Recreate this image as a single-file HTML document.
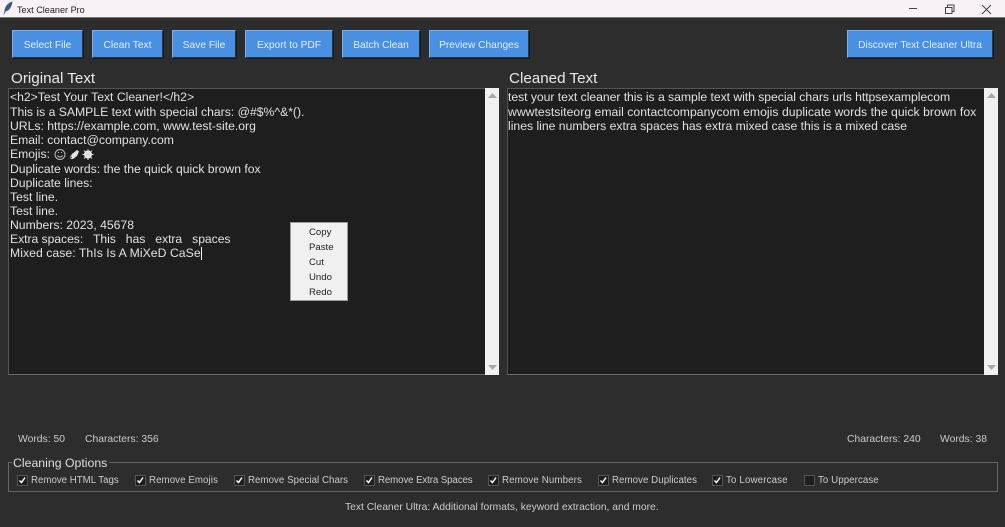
<!DOCTYPE html>
<html><head><meta charset="utf-8">
<style>
html,body{margin:0;padding:0;width:1005px;height:527px;overflow:hidden;background:#2d2d2d;font-family:"Liberation Sans",sans-serif;}
div,span,svg{position:absolute;white-space:pre;box-sizing:border-box}
#w{left:0;top:0;width:1005px;height:527px;filter:blur(.3px)}
.btn{top:30px;height:28px;background:#4a90e2;color:#e4edf8;font-size:10.2px;line-height:27.5px;padding-top:1px;text-align:center;border-top:1px solid #7db0ea;border-left:1px solid #7db0ea;border-right:1px solid #1f3550;border-bottom:1px solid #1f3550;box-shadow:1px 1px 0 #1a1a1a;}
.h{font-size:15.2px;color:#e8e8e8;top:70px;line-height:17px}
.ta{background:#1e1e1e;border-top:1px solid #555;border-left:1px solid #555;border-bottom:1px solid #6a6a6a;top:88px;height:287px;}
.sb{top:88px;width:14px;height:287px;background:#f0f0f0;}
.l{left:10px;font-size:12.2px;line-height:14px;color:#e0e0e0;}
.r{left:508px;font-size:12.2px;line-height:14px;color:#e0e0e0;}
.s{font-size:10.35px;color:#c8ccd0;line-height:12px;top:433.5px}
.c{top:475px;width:11px;height:11px;background:#1e1e1e;border:1px solid #555;}
.t{top:475px;font-size:9.7px;line-height:12px;color:#c8ccd0}
.m{left:309px;font-size:9.6px;line-height:12px;color:#222}
</style></head><body><div id="w">
<div style="left:0;top:0;width:1005px;height:18px;background:#f9f1f8;border-bottom:1px solid #777"></div>
<svg style="left:2px;top:1px" width="12" height="15" viewBox="0 0 12 15"><path d="M10.500 0.500C6.500 1.500 3.500 4.500 2.700 8.500L1.500 14.500L3.700 10.500C7.500 9.500 10 5.500 10.500 0.500Z" fill="#3d5a80"/></svg>
<div style="left:17px;top:4px;font-size:9.1px;line-height:12px;color:#222">Text Cleaner Pro</div>
<svg style="left:905px;top:2px" width="95" height="14" viewBox="0 0 95 14" fill="none" stroke="#444" stroke-width="1"><path d="M4 6.500H12"/><path d="M40.500 5.500H47V11.500H40.500Z"/><path d="M42.500 5.500V3H49V9.500H47"/><path d="M77 3L86 12M86 3L77 12"/></svg>

<div class="btn" style="left:12px;width:71px">Select File</div>
<div class="btn" style="left:92px;width:71px">Clean Text</div>
<div class="btn" style="left:172px;width:64px">Save File</div>
<div class="btn" style="left:245px;width:88px">Export to PDF</div>
<div class="btn" style="left:342px;width:78px">Batch Clean</div>
<div class="btn" style="left:429px;width:100px">Preview Changes</div>
<div class="btn" style="left:847px;width:146px">Discover Text Cleaner Ultra</div>

<div class="h" style="left:11px">Original Text</div>
<div class="h" style="left:509px">Cleaned Text</div>

<div class="ta" style="left:8px;width:477px"></div>
<div class="sb" style="left:485px"></div>
<div class="ta" style="left:507px;width:477px"></div>
<div class="sb" style="left:984px"></div>
<svg style="left:485px;top:88px" width="14" height="287" fill="#a8a8a8"><path d="M3 10L7.500 5L12 10Z"/><path d="M3 277L7.500 282L12 277Z"/></svg>
<svg style="left:984px;top:88px" width="14" height="287" fill="#a8a8a8"><path d="M3 10L7.500 5L12 10Z"/><path d="M3 277L7.500 282L12 277Z"/></svg>

<div class="l" style="top:90px">&lt;h2&gt;Test Your Text Cleaner!&lt;/h2&gt;</div>
<div class="l" style="top:105px">This is a SAMPLE text with special chars: @#$%^&amp;*().</div>
<div class="l" style="top:119px">URLs: https://example.com, www.test-site.org</div>
<div class="l" style="top:133px">Email: contact@company.com</div>
<div class="l" style="top:147px">Emojis:</div>
<svg style="left:54px;top:148px" width="42" height="13" viewBox="0 0 42 13"><circle cx="6" cy="6.500" r="5" fill="none" stroke="#bbb" stroke-width="1"/><path d="M3.500 7.500C4.500 9.500 7.500 9.500 8.500 7.500" fill="none" stroke="#bbb"/><path d="M4 4.500H5M7 4.500H8" stroke="#bbb"/><path d="M15 11L18 6L23 2L25 3.500L23 8L19 11Z" fill="#e4e4e4"/><path d="M15 11L18 9" stroke="#1e1e1e"/><circle cx="34" cy="6.500" r="4" fill="#f0f0f0"/><path d="M34 1V12M28.500 6.500H39.500M30 2.500L38 10.500M38 2.500L30 10.500" stroke="#ddd"/></svg>
<div class="l" style="top:161.500px">Duplicate words: the the quick quick brown fox</div>
<div class="l" style="top:175.500px">Duplicate lines:</div>
<div class="l" style="top:190px">Test line.</div>
<div class="l" style="top:204px">Test line.</div>
<div class="l" style="top:218px">Numbers: 2023, 45678</div>
<div class="l" style="top:232px;letter-spacing:-.05px">Extra spaces:   This   has   extra   spaces</div>
<div class="l" style="top:246px;letter-spacing:.06px">Mixed case: ThIs Is A MiXeD CaSe</div>
<div style="left:201px;top:247px;width:1px;height:13px;background:#eee"></div>

<div class="r" style="top:90px;letter-spacing:-.035px">test your text cleaner this is a sample text with special chars urls httpsexamplecom</div>
<div class="r" style="top:105px;letter-spacing:.036px">wwwtestsiteorg email contactcompanycom emojis duplicate words the quick brown fox</div>
<div class="r" style="top:119px">lines line numbers extra spaces has extra mixed case this is a mixed case</div>

<div style="left:290px;top:222px;width:58px;height:79px;background:#f0f0f0;border:1px solid #999"></div>
<div class="m" style="top:227px">Copy</div>
<div class="m" style="top:242px">Paste</div>
<div class="m" style="top:257px">Cut</div>
<div class="m" style="top:272px">Undo</div>
<div class="m" style="top:287px">Redo</div>

<div class="s" style="left:18px">Words: 50</div>
<div class="s" style="left:85px">Characters: 356</div>
<div class="s" style="left:847px">Characters: 240</div>
<div class="s" style="left:940px">Words: 38</div>

<div style="left:8px;top:462px;width:990px;height:30px;border:1px solid #666"></div>
<div style="left:12px;top:455px;padding:0 2px 0 1px;background:#2d2d2d;font-size:12.3px;line-height:16px;color:#ddd">Cleaning Options</div>

<div class="c" style="left:17px"></div><div class="t" style="left:31px">Remove HTML Tags</div>
<div class="c" style="left:135px"></div><div class="t" style="left:149px;letter-spacing:.08px">Remove Emojis</div>
<div class="c" style="left:234px"></div><div class="t" style="left:248px;letter-spacing:.05px">Remove Special Chars</div>
<div class="c" style="left:364px"></div><div class="t" style="left:378px;letter-spacing:-.1px">Remove Extra Spaces</div>
<div class="c" style="left:488px"></div><div class="t" style="left:502px;letter-spacing:.14px">Remove Numbers</div>
<div class="c" style="left:598px"></div><div class="t" style="left:612px;letter-spacing:.06px">Remove Duplicates</div>
<div class="c" style="left:712px"></div><div class="t" style="left:726px;letter-spacing:.16px">To Lowercase</div>
<div class="c" style="left:804px"></div><div class="t" style="left:818px;letter-spacing:.08px">To Uppercase</div>
<svg style="left:0;top:475px" width="730" height="11" fill="none" stroke="#fff" stroke-width="1.500"><path d="M19.500 5.500L21.500 7.500L25 2.500"/><path d="M137.500 5.500L139.500 7.500L143 2.500"/><path d="M236.500 5.500L238.500 7.500L242 2.500"/><path d="M366.500 5.500L368.500 7.500L372 2.500"/><path d="M490.500 5.500L492.500 7.500L496 2.500"/><path d="M600.500 5.500L602.500 7.500L606 2.500"/><path d="M714.500 5.500L716.500 7.500L720 2.500"/></svg>

<div style="left:345px;top:502px;font-size:10.3px;line-height:12px;color:#c8ccd0">Text Cleaner Ultra: Additional formats, keyword extraction, and more.</div>
</div></body></html>
